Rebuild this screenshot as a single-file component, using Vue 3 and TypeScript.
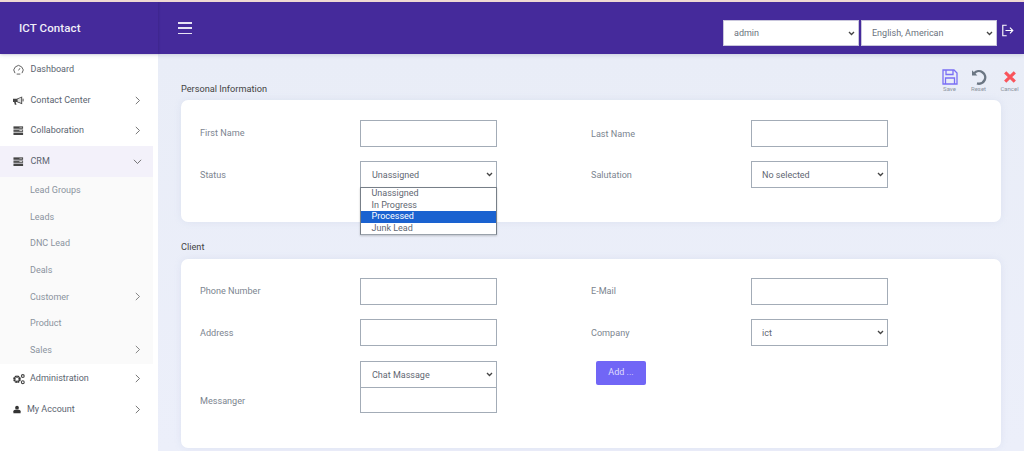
<script setup lang="ts">
interface NavItem { label: string; icon: string; arrow?: boolean; open?: boolean; children?: { label: string; arrow?: boolean }[] }
const nav: NavItem[] = [
  { label: 'Dashboard', icon: 'gauge' },
  { label: 'Contact Center', icon: 'horn', arrow: true },
  { label: 'Collaboration', icon: 'server', arrow: true },
  {
    label: 'CRM', icon: 'server', arrow: true, open: true,
    children: [
      { label: 'Lead Groups' }, { label: 'Leads' }, { label: 'DNC Lead' }, { label: 'Deals' },
      { label: 'Customer', arrow: true }, { label: 'Product' }, { label: 'Sales', arrow: true },
    ],
  },
  { label: 'Administration', icon: 'gears', arrow: true },
  { label: 'My Account', icon: 'user', arrow: true },
]
const statusOptions = ['Unassigned', 'In Progress', 'Processed', 'Junk Lead']
</script>

<template>
  <div class="page">
    <header class="topbar">
      <div class="brand">ICT Contact</div>
      <div class="topbar-main">
        <button class="burger" aria-label="Menu"><span></span><span></span><span></span></button>
        <div class="top-controls">
          <select class="top-select"><option>admin</option></select>
          <select class="top-select"><option>English, American</option></select>
          <svg class="logout" viewBox="0 0 16 16" width="13" height="13" fill="none" stroke="#fff" stroke-width="1.4">
            <path d="M7 1.5H2.2v13H7" /><path d="M5.5 8H14.5M11 4.5 14.5 8 11 11.5" />
          </svg>
        </div>
      </div>
    </header>
    <div class="body">
      <aside class="sidebar">
        <template v-for="item in nav" :key="item.label">
          <div class="nav-item" :class="{ active: item.open }">
            <svg v-if="item.icon === 'gauge'" class="nav-icon" viewBox="0 0 12 12" fill="none" stroke="#555" stroke-width="1">
              <path d="M2.2 10A5 5 0 1 1 9.8 10" /><path d="M6 7 7.6 4.6" /><path d="M4 11h4" />
            </svg>
            <svg v-else-if="item.icon === 'horn'" class="nav-icon" viewBox="0 0 12 12">
              <path d="M0 4.2h4L10 1.5v8.5L4 7.6H3l.8 3H2L1.2 7.6H0z" fill="#444" /><path d="M5 4.6 9 2.8v5.8L5 7z" fill="#ddd" /><path d="M11 4v3" stroke="#444" />
            </svg>
            <svg v-else-if="item.icon === 'server'" class="nav-icon" viewBox="0 0 12 12">
              <rect x="0.5" y="1.5" width="10.5" height="2.6" fill="#444" /><rect x="0.5" y="4.9" width="10.5" height="2.6" fill="#555" /><rect x="0.5" y="8.3" width="10.5" height="2.6" fill="#444" />
              <rect x="7" y="5.6" width="3" height="1" fill="#ddd" /><rect x="7" y="2.2" width="3" height="1" fill="#999" />
            </svg>
            <svg v-else-if="item.icon === 'gears'" class="nav-icon gears" viewBox="0 0 12 12">
              <circle cx="4" cy="6.2" r="2.7" fill="none" stroke="#333" stroke-width="2.2" stroke-dasharray="1.7 .4" />
              <circle cx="9.8" cy="3" r="1.4" fill="none" stroke="#444" stroke-width="1.1" />
              <circle cx="9.8" cy="9.2" r="1.4" fill="none" stroke="#444" stroke-width="1.1" />
            </svg>
            <svg v-else class="nav-icon user" viewBox="0 0 12 12" fill="#333">
              <circle cx="6" cy="3.2" r="2.8" /><path d="M.6 11.6V8.6Q.6 6.6 3.2 6.4h5.6Q11.4 6.6 11.4 8.6v3z" />
            </svg>
            <span class="nav-label">{{ item.label }}</span>
            <svg v-if="item.arrow" class="chev" :class="{ down: item.open }" viewBox="0 0 8 8" fill="none" stroke="#666" stroke-width=".8">
              <path d="M2.5 .8 5.8 4 2.5 7.2" />
            </svg>
          </div>
          <div v-if="item.children" class="sub">
            <div v-for="child in item.children" :key="child.label" class="sub-item">
              <span>{{ child.label }}</span>
              <svg v-if="child.arrow" class="chev" viewBox="0 0 8 8" fill="none" stroke="#777" stroke-width=".8">
                <path d="M2.5 .8 5.8 4 2.5 7.2" />
              </svg>
            </div>
          </div>
        </template>
      </aside>
      <main class="content">
        <div class="actions">
          <div class="action">
            <svg viewBox="0 0 16 16" width="16" height="16" fill="none" stroke="#7a6ff5" stroke-width="1.3">
              <path d="M1 1h11l3 3v11H1z" /><path d="M4 1v4.5h7V1M3.5 15V9h9v6" />
            </svg>
            <span>Save</span>
          </div>
          <div class="action">
            <svg viewBox="0 0 16 16" width="16" height="16" fill="none" stroke="#6b7683" stroke-width="2.4">
              <path d="M3.2 4.2A6.3 6.3 0 1 1 6 14.4" /><path d="M1 1.2v5.4h5.4" fill="#6b7683" stroke="none" />
            </svg>
            <span>Reset</span>
          </div>
          <div class="action cancel">
            <svg viewBox="0 0 16 16" width="14" height="16" fill="none" stroke="#f9545b" stroke-width="3.6">
              <path d="M2.5 2.8 13.5 13.4M13.5 2.8 2.5 13.4" />
            </svg>
            <span>Cancel</span>
          </div>
        </div>
        <h2 class="section-title first">Personal Information</h2>
        <section class="card card-one">
          <div class="form-grid">
            <label>First Name</label><input type="text" />
            <label class="col2">Last Name</label><input type="text" />
            <label>Status</label>
            <div class="select-wrap">
              <select><option>Unassigned</option></select>
              <ul class="dropdown">
                <li v-for="o in statusOptions" :key="o" :class="{ selected: o === 'Processed' }">{{ o }}</li>
              </ul>
            </div>
            <label class="col2">Salutation</label>
            <select class="tight"><option>No selected</option></select>
          </div>
        </section>
        <h2 class="section-title">Client</h2>
        <section class="card card-two">
          <div class="form-grid">
            <label class="raised">Phone Number</label><input type="text" />
            <label class="col2 raised">E-Mail</label><input type="text" />
            <label>Address</label><input type="text" />
            <label class="col2">Company</label>
            <select class="tight"><option>ict</option></select>
            <label class="messenger">Messanger</label>
            <div class="stack">
              <select><option>Chat Massage</option></select>
              <input type="text" />
            </div>
            <div class="add-cell"><button class="add">Add ...</button></div>
          </div>
        </section>
      </main>
    </div>
  </div>
</template>

<style>
html, body { margin: 0; background: #fff; overflow: hidden; }
</style>

<style scoped>
.page {
  width: 1024px;
  height: 451px;
  overflow: hidden;
  font-family: Roboto, "Liberation Sans", sans-serif;
  border-top: 2px solid #efd9d3;
  box-sizing: border-box;
  display: flex;
  flex-direction: column;
}
.topbar {
  height: 52px;
  flex: none;
  display: flex;
  background: #452a9b;
  color: #fff;
  position: relative;
  z-index: 2;
  box-shadow: 0 1px 4px rgba(60, 60, 110, .18);
}
.brand {
  width: 158px;
  flex: none;
  box-sizing: border-box;
  padding: 19px 0 0 19px;
  font-size: 11.5px;
  font-weight: 500;
  line-height: 15px;
  letter-spacing: .1px;
  color: #f0eef8;
  box-shadow: 1px 0 2px rgba(30, 20, 80, .2);
}
.topbar-main {
  flex: 1;
  display: flex;
  justify-content: space-between;
  align-items: flex-start;
  padding: 0 10px 0 20px;
}
.burger {
  margin-top: 20px;
  width: 14px;
  height: 12px;
  padding: 0;
  border: 0;
  background: none;
  display: flex;
  flex-direction: column;
  justify-content: space-between;
}
.burger span { display: block; height: 1.5px; background: #e7e3f4; }
.top-controls {
  display: flex;
  align-items: center;
  margin-top: 18px;
  gap: 2px;
}
select.top-select {
  width: 136px;
  height: 26px;
  padding-left: 10px;
  color: #6a727d;
  border-color: #c9c6dc;
}
.logout { margin: -5px 0 0 2px; }
.body { flex: 1; display: flex; min-height: 0; }
.sidebar {
  width: 158px;
  flex: none;
  box-sizing: border-box;
  padding: .5px 5px 0 0;
  background: #fff;
}
.nav-item {
  height: 30.5px;
  display: flex;
  align-items: center;
  box-sizing: border-box;
  padding: 0 13px;
  font-size: 9px;
  color: #5b6470;
}
.nav-item.active { background: #f3f1fa; }
.nav-icon { width: 11px; height: 11px; flex: none; margin-right: 6.5px; }
.nav-icon.gears { width: 12px; height: 12px; margin-right: 5px; }
.nav-icon.user { width: 8px; height: 9px; margin-right: 6px; }
.nav-label { flex: 1; white-space: nowrap; margin-top: -1px; }
.chev { width: 9px; height: 9px; flex: none; margin-right: -2px; }
.chev.down { transform: rotate(90deg); }
.sub { background: #fafafa; height: 187px; }
.sub-item {
  height: 26.7px;
  display: flex;
  align-items: center;
  justify-content: space-between;
  padding: 0 13px 0 30px;
  font-size: 9px;
  color: #8a939e;
}
.content {
  flex: 1;
  position: relative;
  background: linear-gradient(180deg, #e9edf7, #eceffa);
  padding: 0 23px;
  min-width: 0;
}
.actions {
  position: absolute;
  right: 6px;
  top: 15px;
  display: flex;
  gap: 12px;
}
.action {
  display: flex;
  flex-direction: column;
  align-items: center;
  width: 17px;
  font-size: 6px;
  color: #8c949e;
  white-space: nowrap;
}
.action.cancel { margin-left: 2px; }
.action span { line-height: 8px; }
.section-title {
  margin: 0;
  font-size: 9.2px;
  font-weight: 400;
  line-height: 12px;
  color: #444;
}
.section-title.first { padding-top: 29px; margin-bottom: 5px; }
.card {
  width: 820px;
  background: #fff;
  border-radius: 7px;
  box-sizing: border-box;
  padding: 20px 0 0 19px;
  box-shadow: 0 0 6px rgba(180, 190, 225, .25);
}
.card-one { height: 122px; margin-bottom: 19px; }
.card-two { height: 189px; margin-top: 6px; padding-top: 19px; }
.form-grid {
  display: grid;
  grid-template-columns: 160px 137px 254px 137px;
  row-gap: 14px;
  align-items: center;
}
.form-grid label {
  font-size: 9.1px;
  color: #7c8590;
}
.form-grid label:first-child, .form-grid .raised { margin-top: -2px; }
.form-grid .col2 { padding-left: 94px; white-space: nowrap; }
input, select {
  display: block;
  width: 137px;
  height: 27px;
  box-sizing: border-box;
  background-color: #fff;
  border: 1px solid #a3acb7;
  border-radius: 0;
  font-family: Roboto, "Liberation Sans", sans-serif;
  font-size: 9px;
  color: #5f6772;
  margin: 0;
  outline: none;
}
select {
  appearance: none;
  padding: 0 12px 0 11px;
  background-image: url("data:image/svg+xml,%3Csvg xmlns='http://www.w3.org/2000/svg' viewBox='0 0 8 6'%3E%3Cpath d='M1 1.2 4 4.2 7 1.2' fill='none' stroke='%23444' stroke-width='1.6'/%3E%3C/svg%3E");
  background-repeat: no-repeat;
  background-position: right 3px center;
  background-size: 7px 5px;
}
select.tight { padding-left: 10px; }
.select-wrap { position: relative; width: 137px; height: 27px; }
.dropdown {
  position: absolute;
  left: 0;
  top: 26px;
  z-index: 3;
  width: 137px;
  box-sizing: border-box;
  list-style: none;
  margin: 0;
  padding: 0;
  background: #fff;
  border: 1px solid #777f88;
  border-bottom-color: #9aa2ab;
  box-shadow: 0 1px 2px rgba(0, 0, 0, .2);
}
.dropdown li {
  height: 11.6px;
  line-height: 11.6px;
  padding-left: 10.5px;
  font-size: 9px;
  color: #5f6772;
}
.dropdown li.selected { background: #1a62d0; color: #fff; }
.messenger { align-self: end; margin-bottom: 7px; }
.stack { display: flex; flex-direction: column; margin-top: 1px; }
.stack input { margin-top: -1px; height: 26px; }
.add-cell { grid-column: span 2; align-self: start; padding-left: 99px; }
.add {
  width: 50px;
  height: 24px;
  border: 0;
  border-radius: 2px;
  background: #7166f6;
  color: #dfddfd;
  font-family: Roboto, "Liberation Sans", sans-serif;
  font-size: 9px;
  padding: 0 0 2px;
}
</style>
